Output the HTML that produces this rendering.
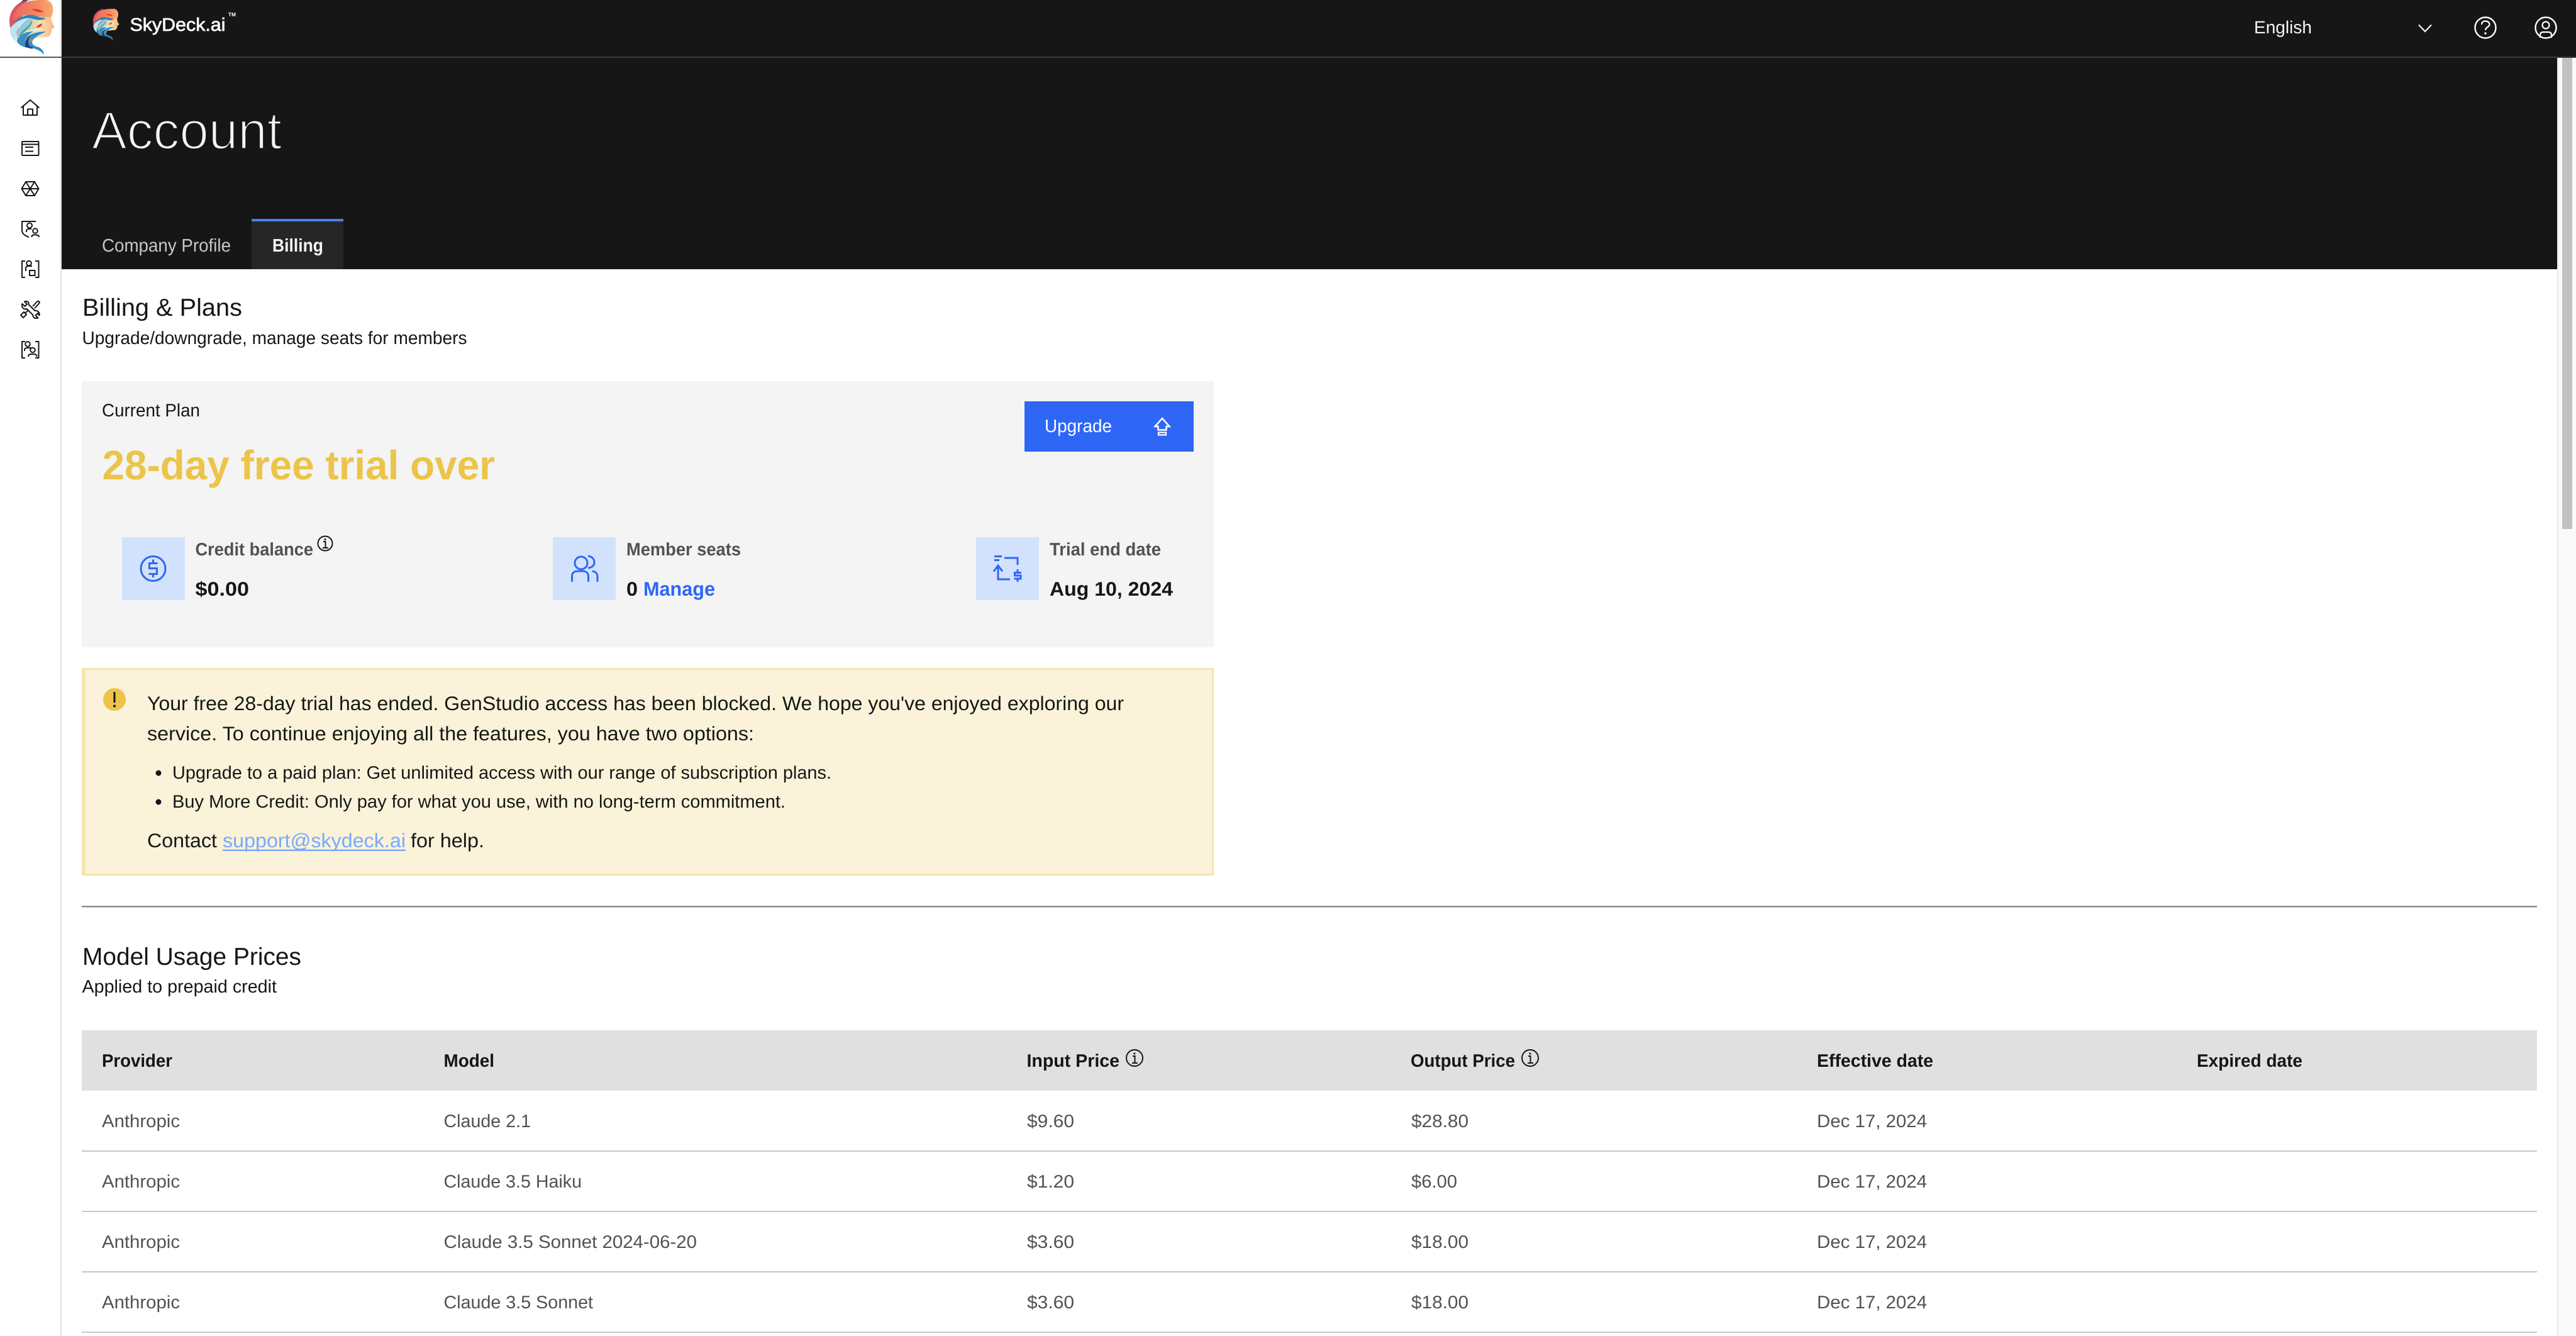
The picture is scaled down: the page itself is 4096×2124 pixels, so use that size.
<!DOCTYPE html>
<html lang="en">
<head>
<meta charset="utf-8">
<title>Account - Billing</title>
<style>
html,body{margin:0;padding:0;width:4096px;height:2124px;overflow:hidden;background:#fff}
svg{display:block}
text{font-family:"Liberation Sans",Arial,sans-serif;text-rendering:geometricPrecision;white-space:pre}
.k{fill:#161616}
.g{fill:#525252}
.r{font-size:28.7px;fill:#525252}
.h{font-size:28.7px;font-weight:700;fill:#161616}
.t{font-size:31.3px;fill:#161616}
.l{font-size:28.7px;fill:#161616}
.ic{fill:none;stroke:#161616;stroke-width:2;stroke-linecap:butt;stroke-linejoin:round}
.bl{fill:none;stroke:#2e66f6;stroke-width:3}
.in{fill:none;stroke:#161616;stroke-width:2}
</style>
</head>
<body>
<svg xmlns="http://www.w3.org/2000/svg" width="4096" height="2124" viewBox="0 0 4096 2124">
<defs>
<linearGradient id="hair" x1="0" y1="0" x2="1" y2="0"><stop offset="0" stop-color="#e9685f"/><stop offset=".6" stop-color="#f4875f"/><stop offset="1" stop-color="#f9ad6f"/></linearGradient>
<linearGradient id="face" x1="0" y1="0" x2="1" y2="0"><stop offset="0" stop-color="#a9d3b4"/><stop offset=".55" stop-color="#fbdfae"/><stop offset="1" stop-color="#f8b27e"/></linearGradient>
<symbol id="logo" viewBox="0 0 240 276">
<path d="M100 0C50 10 15 50 15 100C15 130 25 160 40 185L70 100Z" fill="#d8566a"/>
<path d="M60 22C75 10 95 2 115 0H80Z" fill="#5d3a5e"/>
<path d="M70 25C100 0 140 0 190 0C215 5 228 30 222 60L215 82C190 90 150 75 120 72C90 68 55 80 30 100C32 70 45 45 70 25Z" fill="url(#hair)"/>
<path d="M100 90C140 80 190 85 213 80C215 100 222 120 232 128L216 140C214 150 220 155 208 165C208 180 190 175 170 178C130 182 100 190 80 180Z" fill="url(#face)"/>
<path d="M122 44C140 40 165 45 178 58C155 60 135 55 122 44Z" fill="#e8352a"/>
<path d="M143 131C150 120 160 115 172 112C170 125 158 133 143 131Z" fill="#e0352a"/>
<path d="M30 118C60 80 100 62 140 75C160 82 175 85 190 88C170 100 140 95 120 88C90 82 60 95 30 118Z" fill="#2e83b8"/>
<path d="M18 135C40 105 75 85 105 90C80 100 60 120 50 150C42 175 45 190 48 200C25 180 15 160 18 135Z" fill="#bfe4ef"/>
<path d="M105 90C85 100 62 122 52 150C48 165 48 180 50 192C60 165 90 140 118 125C122 112 122 100 120 92Z" fill="#8fcbdc"/>
<path d="M120 100C110 130 80 135 60 170L66 175C90 145 120 130 125 100Z" fill="#5f9f8e"/>
<path d="M55 190C70 150 110 140 175 135C140 150 100 160 80 200Z" fill="#e6f3e6"/>
<path d="M50 195C60 165 90 150 130 150C100 165 85 190 90 225C70 220 55 210 50 195Z" fill="#3a8fc0"/>
<path d="M90 225C85 195 100 170 130 160C110 180 105 205 130 222C140 228 150 228 120 232Z" fill="#1f3f80"/>
<path d="M120 165C150 150 170 152 190 150C165 165 140 170 125 195C120 210 130 220 155 225C170 232 180 245 180 262C165 240 140 235 110 220C100 200 105 180 120 165Z" fill="#2f8fcc"/>
<path d="M108 200C112 192 120 186 128 184C128 194 120 202 108 200Z" fill="#ef7b2e"/>
</symbol>
</defs>

<!-- sidebar -->
<rect x="0" y="0" width="98" height="2124" fill="#fff"/>
<rect x="96" y="0" width="2" height="2124" fill="#e0e0e0"/>
<rect x="0" y="90" width="98" height="2" fill="#555"/>
<use href="#logo" x="10" y="0" width="80" height="92"/>

<!-- header -->
<rect x="98" y="0" width="3998" height="92" fill="#161616"/>
<rect x="98" y="90" width="3998" height="2" fill="#393939"/>
<use href="#logo" x="145" y="14" width="46.4" height="53"/>
<text x="206.500" y="49" font-size="29" fill="#fff" stroke="#fff" stroke-width=".7" textLength="152" lengthAdjust="spacingAndGlyphs">SkyDeck.ai</text>
<text x="363" y="26" font-size="8.5" font-weight="700" fill="#fff" textLength="12" lengthAdjust="spacingAndGlyphs">TM</text>
<text x="3584" y="53" font-size="28" fill="#f4f4f4" textLength="92" lengthAdjust="spacingAndGlyphs">English</text>
<path d="M3846 39.5L3856 50L3866 39.5" fill="none" stroke="#f4f4f4" stroke-width="2.2"/>
<circle cx="3952" cy="44" r="16.5" fill="none" stroke="#fff" stroke-width="2.4"/>
<path d="M3946 39C3946 35 3949 33.500 3952 33.500C3956 33.500 3958.500 36 3958.500 39C3958.500 43 3952 43 3952 48" fill="none" stroke="#fff" stroke-width="2.2"/>
<circle cx="3952" cy="53" r="1.800" fill="#fff"/>
<circle cx="4048" cy="44" r="16.5" fill="none" stroke="#fff" stroke-width="2.4"/>
<circle cx="4048" cy="40" r="5.500" fill="none" stroke="#fff" stroke-width="2.2"/>
<path d="M4039 60V56C4039 52.500 4041 51 4044 51H4052C4055 51 4057 52.500 4057 56V60" fill="none" stroke="#fff" stroke-width="2.2"/>

<!-- title band -->
<rect x="98" y="92" width="3968" height="336" fill="#161616"/>
<text x="146" y="236.500" font-size="84" fill="#f4f4f4" stroke="#161616" stroke-width="2.400" paint-order="fill" textLength="302" lengthAdjust="spacingAndGlyphs">Account</text>
<rect x="400" y="348" width="146" height="80" fill="#262626"/>
<rect x="400" y="348" width="146" height="4" fill="#4a7ff0"/>
<text x="162" y="400" font-size="29" fill="#c6c6c6" textLength="205" lengthAdjust="spacingAndGlyphs">Company Profile</text>
<text x="433" y="400" font-size="29" font-weight="700" fill="#f4f4f4" textLength="81" lengthAdjust="spacingAndGlyphs">Billing</text>

<!-- sidebar icons -->
<g class="ic">
<path d="M33.500 171.500L48 159L62.500 171.500"/><path d="M37 168V183H59V168"/><path d="M44 183V173.500H52V183"/>
<rect x="35" y="225" width="26.500" height="22" rx="1"/><path d="M35 229.500H61.500M40 234H53M40 240.500H53"/>
<path d="M34.500 300L41 289H55L61.500 300L55 311H41Z"/><path d="M41 289L55 311M55 289L41 311M34.500 300H61.500"/>
<path d="M57 352H35V366C35 372 40 375 46 377"/><circle cx="47" cy="358.500" r="4"/><path d="M42 369V367C42 365 44 364 46 364H50"/><circle cx="56" cy="367" r="3.800"/><path d="M50.500 377V376C50.500 374 52 373.500 54 373.500H58C60.500 373.500 62 374.500 62 377"/>
<path d="M40 415H35V441H40M56 415H61.500V441H56"/><circle cx="46" cy="418.500" r="3.800"/><path d="M41 431V426C41 424 43 423 46 423H51"/><rect x="47" y="430" width="8.500" height="8"/>
<path d="M39 479.500L43 483.500L39.500 487L35.500 483C34 487 36 491.500 41 491.500L42.500 491L52.500 501C52 505 56 507 60.500 505.500L56.500 501.500L60 498L62.500 501.500C63.500 497 60 493 55.500 494L45.500 484C46.500 480 43.500 478 39 479.500Z"/>
<path d="M52 487L59 479.500C60 478.500 61 478.500 62 479.500C63 480.500 63 481.500 62 482.500L55 490"/>
<path d="M45 493L40.500 497.500M38 496L42 500L37 505L33 501Z"/>
<path d="M40 543H35V569H40M56 543H61.500V569H56"/><circle cx="44" cy="547" r="3.800"/><path d="M39 558V556C39 554 41 553 43 553H49"/><circle cx="52" cy="556.500" r="3.800"/><path d="M45 567C45 564 47 563 49.500 563H54.500C57 563 58.500 564 58.500 567"/>
</g>

<!-- Billing & Plans -->
<text x="131" y="502" font-size="39" class="k" textLength="254" lengthAdjust="spacingAndGlyphs">Billing &amp; Plans</text>
<text x="130.500" y="547" font-size="28.7" class="k" textLength="612" lengthAdjust="spacingAndGlyphs">Upgrade/downgrade, manage seats for members</text>

<!-- plan card -->
<rect x="130" y="606" width="1800" height="423" fill="#f4f4f4"/>
<text x="162" y="662" class="l" textLength="156" lengthAdjust="spacingAndGlyphs">Current Plan</text>
<text x="162.500" y="762" font-size="65.500" font-weight="700" fill="#ecc44a" textLength="624.500" lengthAdjust="spacingAndGlyphs">28-day free trial over</text>
<rect x="1629" y="638" width="269" height="80" fill="#2e66f6"/>
<text x="1661" y="687" font-size="28.7" fill="#fff" textLength="107" lengthAdjust="spacingAndGlyphs">Upgrade</text>
<path d="M1848 665L1859.500 678H1854.500V683.500H1841.500V678H1836.500Z" fill="none" stroke="#fff" stroke-width="2.500"/>
<rect x="1842" y="687.500" width="12" height="4" fill="none" stroke="#fff" stroke-width="2.200"/>

<rect x="194" y="854" width="100" height="100" fill="#d2e2fc"/>
<circle cx="243.500" cy="904" r="19.500" class="bl"/>
<path d="M250.500 895.500H237.500V903.500H249.500V912.500H236.500M243.500 889.500V895.500M243.500 912.500V918" class="bl"/>
<text x="310.500" y="883" font-size="28.7" font-weight="700" class="g" textLength="187.500" lengthAdjust="spacingAndGlyphs">Credit balance</text>
<circle cx="517" cy="864" r="11.500" class="in"/>
<path d="M514 861H517.500V870.500M513 871H522" class="in"/><circle cx="517" cy="857.500" r="1.500" fill="#161616"/>
<text x="310.500" y="947" font-size="31.3" font-weight="700" class="k" textLength="85.500" lengthAdjust="spacingAndGlyphs">$0.00</text>

<rect x="879" y="854" width="100" height="100" fill="#d2e2fc"/>
<circle cx="924" cy="895" r="10" class="bl"/>
<path d="M935 884C942 885 945 889 945 894C945 899 942 902 935 903" class="bl"/>
<path d="M909.500 925V916C909.500 911 913 908 919 908H926C932 908 935.500 911 935.500 916V925" class="bl"/>
<path d="M950 925V916C950 912 947 909 942 908" class="bl"/>
<text x="996" y="883" font-size="28.7" font-weight="700" class="g" textLength="182" lengthAdjust="spacingAndGlyphs">Member seats</text>
<text x="996" y="947" font-size="31.3" font-weight="700" class="k" textLength="18" lengthAdjust="spacingAndGlyphs">0</text>
<text x="1023" y="947" font-size="31.3" font-weight="700" fill="#2e66f6" textLength="114" lengthAdjust="spacingAndGlyphs">Manage</text>

<rect x="1552" y="854" width="100" height="100" fill="#d2e2fc"/>
<path d="M1581 884.500H1593M1581 890.500H1589M1597 887H1618V898M1587 900V921H1606M1580 908.500L1587 899L1594 908.500" class="bl"/>
<path d="M1624 910.500H1613.500V915H1623V920H1612.500M1618 905V910.500M1618 920V925" class="bl"/>
<text x="1669" y="883" font-size="28.7" font-weight="700" class="g" textLength="177" lengthAdjust="spacingAndGlyphs">Trial end date</text>
<text x="1669" y="947" font-size="31.3" font-weight="700" class="k" textLength="196" lengthAdjust="spacingAndGlyphs">Aug 10, 2024</text>

<!-- warning -->
<rect x="130" y="1062" width="1800" height="330" fill="#f5e4ae"/>
<rect x="136" y="1065" width="1791" height="324" fill="#fbf3d9"/>
<circle cx="182" cy="1112" r="18" fill="#ecc44a"/>
<rect x="180.500" y="1100" width="3" height="17" fill="#161616"/><circle cx="182" cy="1122.500" r="2" fill="#161616"/>
<text x="234" y="1129" class="t" textLength="1553" lengthAdjust="spacingAndGlyphs">Your free 28-day trial has ended. GenStudio access has been blocked. We hope you've enjoyed exploring our</text>
<text x="234" y="1177" class="t" textLength="965" lengthAdjust="spacingAndGlyphs">service. To continue enjoying all the features, you have two options:</text>
<circle cx="252" cy="1229" r="4.500" fill="#161616"/>
<text x="274" y="1238" class="l" textLength="1048" lengthAdjust="spacingAndGlyphs">Upgrade to a paid plan: Get unlimited access with our range of subscription plans.</text>
<circle cx="252" cy="1275" r="4.500" fill="#161616"/>
<text x="274" y="1284" class="l" textLength="975" lengthAdjust="spacingAndGlyphs">Buy More Credit: Only pay for what you use, with no long-term commitment.</text>
<text x="234" y="1347" class="t" textLength="111" lengthAdjust="spacingAndGlyphs">Contact</text>
<text x="354" y="1347" class="t" style="fill:#78a9ff" textLength="291" lengthAdjust="spacingAndGlyphs">support@skydeck.ai</text>
<rect x="354" y="1350.500" width="291" height="2.500" fill="#78a9ff"/>
<text x="653" y="1347" class="t" textLength="117" lengthAdjust="spacingAndGlyphs">for help.</text>

<rect x="130" y="1440" width="3904" height="2.500" fill="#8d8d8d"/>

<!-- model usage -->
<text x="131" y="1534" font-size="39" class="k" textLength="348" lengthAdjust="spacingAndGlyphs">Model Usage Prices</text>
<text x="130.500" y="1578" font-size="28.7" class="k" textLength="309.500" lengthAdjust="spacingAndGlyphs">Applied to prepaid credit</text>

<rect x="130" y="1638" width="3904" height="96" fill="#e0e0e0"/>
<text x="162" y="1696" class="h" textLength="112" lengthAdjust="spacingAndGlyphs">Provider</text>
<text x="705.500" y="1696" class="h" textLength="80.500" lengthAdjust="spacingAndGlyphs">Model</text>
<text x="1632.500" y="1696" class="h" textLength="147.500" lengthAdjust="spacingAndGlyphs">Input Price</text>
<circle cx="1804" cy="1682" r="13" class="in"/>
<path d="M1801 1679H1804.500V1689.500M1800 1690H1809" class="in"/><circle cx="1804" cy="1675" r="1.500" fill="#161616"/>
<text x="2243" y="1696" class="h" textLength="166" lengthAdjust="spacingAndGlyphs">Output Price</text>
<circle cx="2433" cy="1682" r="13" class="in"/>
<path d="M2430 1679H2433.500V1689.500M2429 1690H2438" class="in"/><circle cx="2433" cy="1675" r="1.500" fill="#161616"/>
<text x="2889" y="1696" class="h" textLength="185" lengthAdjust="spacingAndGlyphs">Effective date</text>
<text x="3493" y="1696" class="h" textLength="168" lengthAdjust="spacingAndGlyphs">Expired date</text>

<rect x="130" y="1829" width="3904" height="2" fill="#c6c6c6"/>
<rect x="130" y="1925" width="3904" height="2" fill="#c6c6c6"/>
<rect x="130" y="2021" width="3904" height="2" fill="#c6c6c6"/>
<rect x="130" y="2117" width="3904" height="2" fill="#c6c6c6"/>

<text x="162" y="1792" class="r" textLength="124" lengthAdjust="spacingAndGlyphs">Anthropic</text>
<text x="705.500" y="1792" class="r" textLength="138.500" lengthAdjust="spacingAndGlyphs">Claude 2.1</text>
<text x="1633" y="1792" class="r" textLength="75" lengthAdjust="spacingAndGlyphs">$9.60</text>
<text x="2244" y="1792" class="r" textLength="91" lengthAdjust="spacingAndGlyphs">$28.80</text>
<text x="2889" y="1792" class="r" textLength="175" lengthAdjust="spacingAndGlyphs">Dec 17, 2024</text>

<text x="162" y="1888" class="r" textLength="124" lengthAdjust="spacingAndGlyphs">Anthropic</text>
<text x="705.500" y="1888" class="r" textLength="219.500" lengthAdjust="spacingAndGlyphs">Claude 3.5 Haiku</text>
<text x="1633" y="1888" class="r" textLength="75" lengthAdjust="spacingAndGlyphs">$1.20</text>
<text x="2244" y="1888" class="r" textLength="73" lengthAdjust="spacingAndGlyphs">$6.00</text>
<text x="2889" y="1888" class="r" textLength="175" lengthAdjust="spacingAndGlyphs">Dec 17, 2024</text>

<text x="162" y="1984" class="r" textLength="124" lengthAdjust="spacingAndGlyphs">Anthropic</text>
<text x="705.500" y="1984" class="r" textLength="402.500" lengthAdjust="spacingAndGlyphs">Claude 3.5 Sonnet 2024-06-20</text>
<text x="1633" y="1984" class="r" textLength="75" lengthAdjust="spacingAndGlyphs">$3.60</text>
<text x="2244" y="1984" class="r" textLength="91" lengthAdjust="spacingAndGlyphs">$18.00</text>
<text x="2889" y="1984" class="r" textLength="175" lengthAdjust="spacingAndGlyphs">Dec 17, 2024</text>

<text x="162" y="2080" class="r" textLength="124" lengthAdjust="spacingAndGlyphs">Anthropic</text>
<text x="705.500" y="2080" class="r" textLength="237.500" lengthAdjust="spacingAndGlyphs">Claude 3.5 Sonnet</text>
<text x="1633" y="2080" class="r" textLength="75" lengthAdjust="spacingAndGlyphs">$3.60</text>
<text x="2244" y="2080" class="r" textLength="91" lengthAdjust="spacingAndGlyphs">$18.00</text>
<text x="2889" y="2080" class="r" textLength="175" lengthAdjust="spacingAndGlyphs">Dec 17, 2024</text>

<!-- scrollbar -->
<rect x="4066" y="92" width="30" height="2032" fill="#fafafa"/>
<rect x="4066" y="92" width="2" height="2032" fill="#e8e8e8"/>
<rect x="4074" y="92" width="16" height="749" fill="#c1c1c1"/>
</svg>
</body>
</html>
